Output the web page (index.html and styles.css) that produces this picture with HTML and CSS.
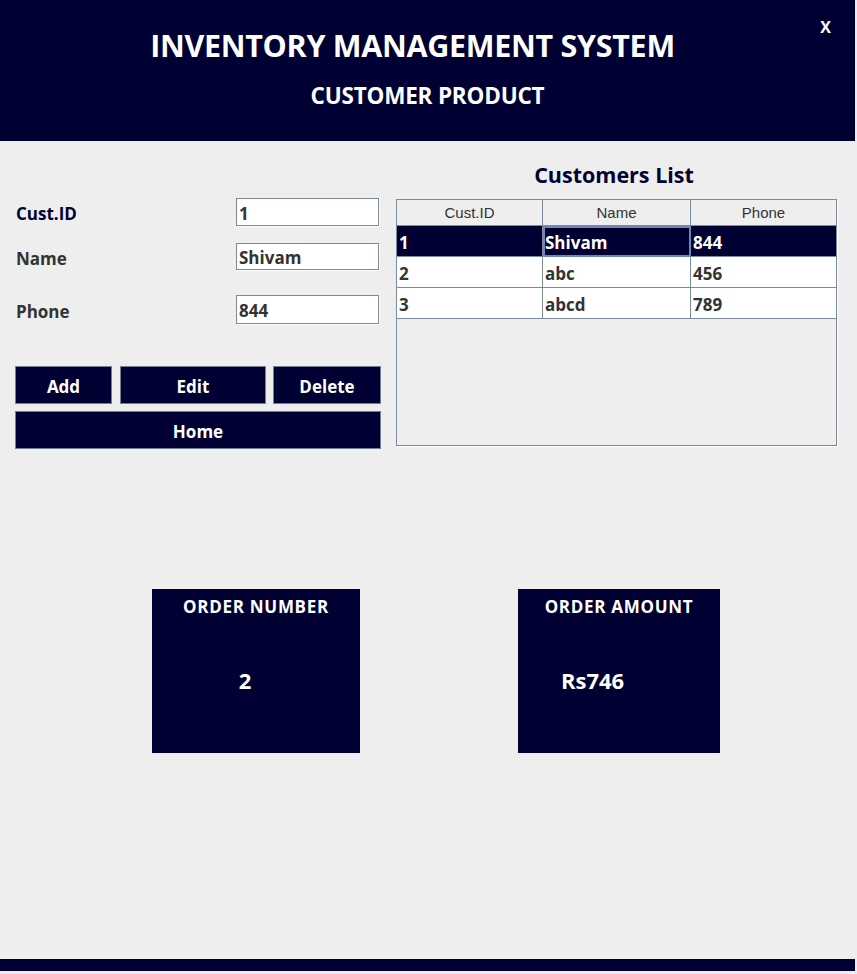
FILE: index.html
```html
<!DOCTYPE html>
<html>
<head>
<meta charset="utf-8">
<link rel="stylesheet" href="styles.css">
</head>
<body>
<div class="app">
  <header class="header">
    <div class="close">X</div>
    <h1 class="title">INVENTORY MANAGEMENT SYSTEM</h1>
    <h2 class="subtitle">CUSTOMER PRODUCT</h2>
  </header>

  <main class="main">
    <section class="form">
      <div class="field f1">
        <label class="lbl lbl-id">Cust.ID</label>
        <div class="input">1</div>
      </div>
      <div class="field f2">
        <label class="lbl">Name</label>
        <div class="input">Shivam</div>
      </div>
      <div class="field f3">
        <label class="lbl">Phone</label>
        <div class="input">844</div>
      </div>
      <div class="btns">
        <button class="btn b-add">Add</button>
        <button class="btn b-edit">Edit</button>
        <button class="btn b-del">Delete</button>
      </div>
      <button class="btn b-home">Home</button>
    </section>

    <section class="list">
      <h3 class="list-title">Customers List</h3>
      <div class="table-wrap">
        <table class="grid">
          <thead>
            <tr><th>Cust.ID</th><th>Name</th><th>Phone</th></tr>
          </thead>
          <tbody>
            <tr class="sel"><td>1</td><td class="focus">Shivam</td><td>844</td></tr>
            <tr><td>2</td><td>abc</td><td>456</td></tr>
            <tr><td>3</td><td>abcd</td><td>789</td></tr>
          </tbody>
        </table>
      </div>
    </section>
  </main>

  <section class="cards">
    <div class="card c1">
      <div class="card-title">ORDER NUMBER</div>
      <div class="card-value v1">2</div>
    </div>
    <div class="card c2">
      <div class="card-title">ORDER AMOUNT</div>
      <div class="card-value v2">Rs746</div>
    </div>
  </section>

  <div class="spacer"></div>
  <footer class="footer"></footer>
</div>
</body>
</html>
```

FILE: styles.css
```css
html, body {
  margin: 0;
  padding: 0;
  background: #eeeeee;
}
body {
  font-family: "Open Sans", "Noto Sans", sans-serif;
  width: 857px;
  height: 974px;
  overflow: hidden;
}
.app {
  width: 857px;
  height: 974px;
  display: flex;
  flex-direction: column;
}
.header {
  position: relative;
  width: 855px;
  height: 141px;
  background: #000033;
  color: #ffffff;
  text-align: center;
  box-sizing: border-box;
  padding-top: 25px;
}
.close {
  position: absolute;
  right: 24px;
  top: 16px;
  font-weight: 700;
  font-size: 16px;
}
.title {
  margin: 0;
  font-size: 30.5px;
  font-weight: 700;
  line-height: 40px;
  letter-spacing: -0.3px;
  padding-right: 30px;
}
.subtitle {
  margin: 0;
  margin-top: 16px;
  font-size: 22.5px;
  font-weight: 700;
  line-height: 30px;
  letter-spacing: -0.2px;
}

.main {
  display: flex;
  padding-top: 22px;
}
.form {
  width: 366px;
  margin-left: 15px;
  padding-top: 35px;
}
.field {
  display: flex;
  align-items: center;
  justify-content: space-between;
  height: 28px;
}
.f2 { margin-top: 17px; height: 27px; }
.f3 { margin-top: 25px; height: 29px; }
.lbl {
  font-size: 17px;
  font-weight: 700;
  color: #333333;
  padding-left: 1px;
  padding-top: 3px;
}
.lbl-id { color: #000033; }
.input {
  width: 143px;
  height: 100%;
  box-sizing: border-box;
  border: 1px solid #7a8a9c;
  background: #ffffff;
  box-shadow: 1px 1px 0 #ffffff;
  font-size: 17px;
  font-weight: 700;
  color: #333333;
  padding-left: 2px;
  padding-top: 2px;
  display: flex;
  align-items: center;
  margin-right: 2px;
}
.btns {
  display: flex;
  margin-top: 42px;
  gap: 0;
}
.btn {
  background: #000033;
  color: #ffffff;
  border: 1px solid #6f7f95;
  font-family: "Open Sans", "Noto Sans", sans-serif;
  font-weight: 700;
  font-size: 17px;
  height: 38px;
  padding: 3px 0 0 0;
  box-sizing: border-box;
}
.b-add { width: 97px; }
.b-edit { width: 146px; margin-left: 8px; }
.b-del { width: 108px; margin-left: 7px; }
.b-home { width: 366px; margin-top: 7px; display: block; }

.list {
  margin-left: 15px;
  width: 442px;
}
.list-title {
  margin: 0;
  text-align: center;
  font-size: 21.5px;
  font-weight: 700;
  color: #000033;
  line-height: 24px;
  height: 36px;
  padding-right: 6px;
}
.table-wrap {
  width: 441px;
  height: 247px;
  box-sizing: border-box;
  border: 1px solid #7a8a9f;
  background: #eeeeee;
  box-shadow: 1px 1px 0 #ffffff;
}
.grid {
  width: 100%;
  border-collapse: collapse;
  table-layout: fixed;
}
.grid th {
  height: 24px;
  line-height: 24px;
  font-family: "Liberation Sans", Arial, sans-serif;
  font-weight: 400;
  font-size: 15px;
  color: #333333;
  background: #eeeeee;
  border-right: 1px solid #7a8a9f;
  border-bottom: 1px solid #7a8a9f;
  padding: 1px 0 0 0;
}
.grid th:first-child { width: 145px; }
.grid th:nth-child(2) { width: 147px; }
.grid th:last-child { border-right: none; }
.grid td {
  height: 31px;
  box-sizing: border-box;
  font-size: 17px;
  font-weight: 700;
  color: #333333;
  background: #ffffff;
  border-right: 1px solid #7a8a9f;
  border-bottom: 1px solid #7a8a9f;
  padding: 3px 0 0 2px;
}
.grid td:last-child { border-right: none; }
.grid tr.sel td {
  background: #000033;
  color: #ffffff;
}
.grid td.focus {
  outline: 2px solid #6d86b3;
  outline-offset: -2px;
}

.cards {
  display: flex;
  margin-top: 140px;
  padding-left: 152px;
}
.card {
  background: #000033;
  color: #ffffff;
  height: 164px;
  box-sizing: border-box;
}
.c1 { width: 208px; }
.c2 { width: 202px; margin-left: 158px; }
.card-title {
  text-align: center;
  font-size: 17px;
  font-weight: 700;
  letter-spacing: 0.7px;
  padding-top: 6px;
  line-height: 24px;
}
.card-value {
  font-size: 22px;
  font-weight: 700;
  margin-top: 46px;
  line-height: 30px;
}
.v1 { text-align: center; padding-right: 22px; }
.v2 { padding-left: 43px; }

.spacer { flex: 1; }
.footer {
  width: 855px;
  height: 12px;
  background: #000033;
  margin-bottom: 3px;
}
```
